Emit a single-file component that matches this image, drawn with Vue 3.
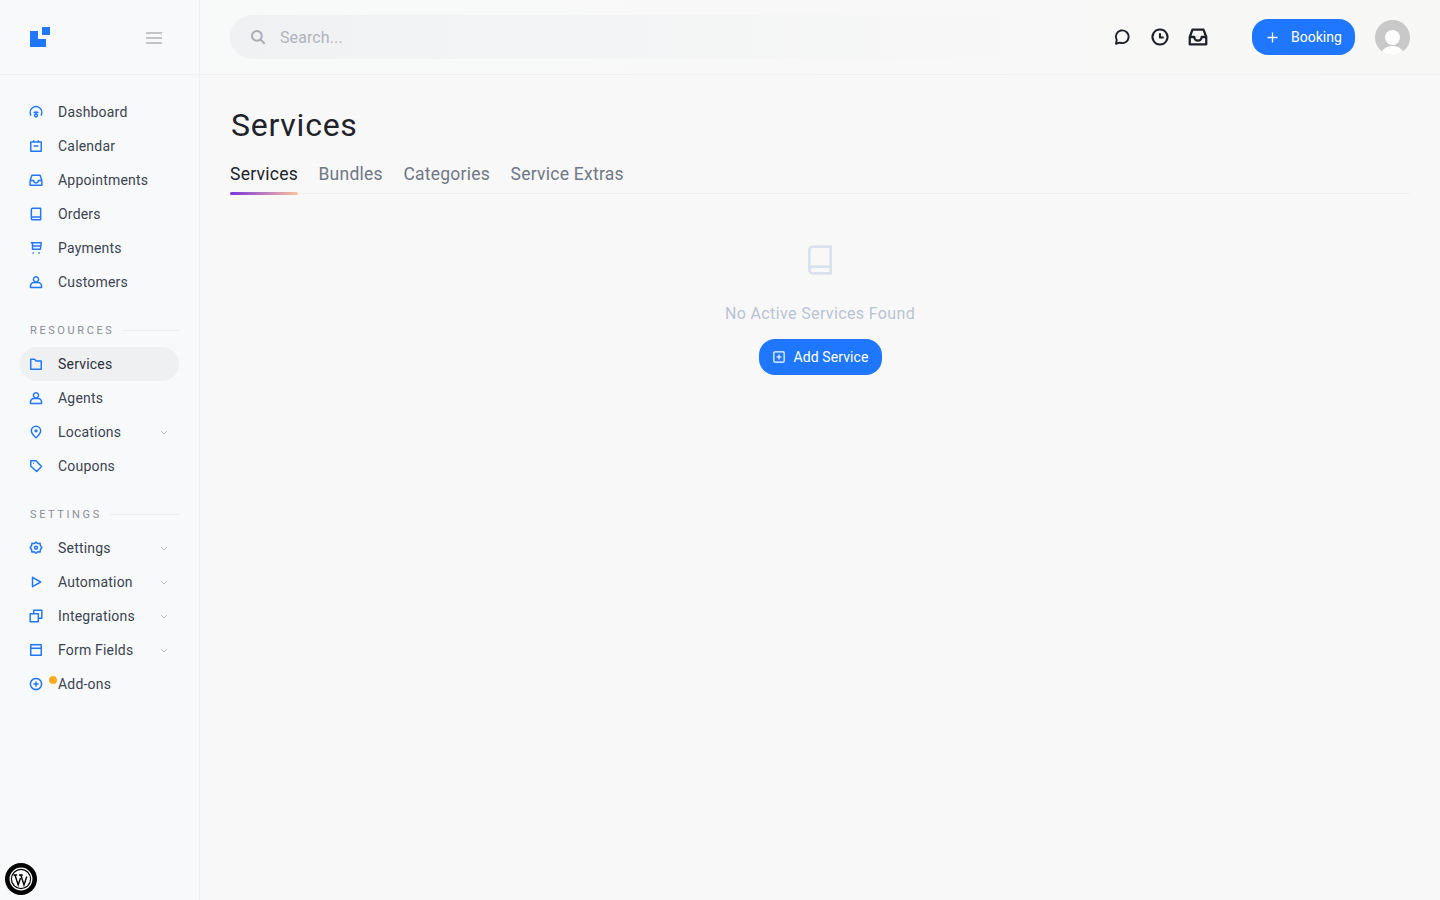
<script setup>
const icons = {
  gauge: 'M3.500 18A10 10 0 1 1 20.500 18M8 13.500a5.500 5.500 0 0 1 8 0M12 11.500v4M12 15.500a2.500 2.500 0 1 0 .01 0z',
  calendar: 'M3 5h18v16H3zM8 2v4M16 2v4M8 12h8',
  inbox: 'M2 13l3-9h14l3 9v8H2zM2 13h6a4 4 0 0 0 8 0h6',
  book: 'M4 19V4.500A2.500 2.500 0 0 1 6.500 2H20v20H6.500A2.500 2.500 0 0 1 4 19.500a2.500 2.500 0 0 1 2.500-2.500H20',
  cart: 'M3 3h18l-1.500 11H6V3M6 8.500h14M6 20.500h2.500M16 20.500h2.500',
  user: 'M12 3a4.500 4.500 0 1 1-.01 0zM2.500 21.500v-2.500a6 6 0 0 1 6-6h7a6 6 0 0 1 6 6v2.500z',
  folder: 'M3 4h7l2 3h9v14H3z',
  pin: 'M12 22c-4-3.800-8-7-8-12a8 8 0 0 1 16 0c0 5-4 8.200-8 12zM12 8.500a1.500 1.500 0 1 1-.01 0z',
  tag: 'M3 3h9l9.500 10-8.500 8.500L3 12zM7 7.500h1.500',
  gear: 'M12 2l3 2.500 4-.5.500 4 2.500 3.500-2.500 3.500-.5 4-4-.5L12 21l-3-2.500-4 .5-.5-4L2 11.500 4.500 8 5 4l4 .5zM12 9a2.500 2.500 0 1 1-.01 0z',
  play: 'M6 4l14 8-14 8z',
  stack: 'M8 8V2h14v14h-6M2 8h14v14H2z',
  form: 'M3 3h18v18H3zM3 9h18',
  addon: 'M12 2.500a9.500 9.500 0 1 1-.01 0zM7.500 12h9M12 7.500v9',
}
const mainNav = [
  { label: 'Dashboard', icon: 'gauge' },
  { label: 'Calendar', icon: 'calendar' },
  { label: 'Appointments', icon: 'inbox' },
  { label: 'Orders', icon: 'book' },
  { label: 'Payments', icon: 'cart' },
  { label: 'Customers', icon: 'user' },
]
const resources = [
  { label: 'Services', icon: 'folder', active: true },
  { label: 'Agents', icon: 'user' },
  { label: 'Locations', icon: 'pin', more: true },
  { label: 'Coupons', icon: 'tag' },
]
const settings = [
  { label: 'Settings', icon: 'gear', more: true },
  { label: 'Automation', icon: 'play', more: true },
  { label: 'Integrations', icon: 'stack', more: true },
  { label: 'Form Fields', icon: 'form', more: true },
  { label: 'Add-ons', icon: 'addon', dot: true },
]
const groups = [
  { title: null, items: mainNav },
  { title: 'RESOURCES', items: resources },
  { title: 'SETTINGS', items: settings },
]
const tabs = ['Services', 'Bundles', 'Categories', 'Service Extras']
</script>

<template>
  <div class="app">
    <aside class="sidebar">
      <div class="brand">
        <svg class="logo" width="20" height="20" viewBox="0 0 20 20"><path d="M0 4h8v8h8v8H0zM12 0h8v8h-8z" fill="#1f77ff" /></svg>
        <svg class="burger" width="16" height="12" viewBox="0 0 16 12"><path d="M0 1h16M0 6h16M0 11h16" stroke="#b3b3b3" stroke-width="1.500" fill="none" /></svg>
      </div>
      <nav class="nav">
        <section v-for="(g, i) in groups" :key="i" class="group">
          <div v-if="g.title" class="group-title"><span>{{ g.title }}</span><i></i></div>
          <a v-for="it in g.items" :key="it.label" class="item" :class="{ active: it.active }">
            <svg class="item-icon" width="14" height="14" viewBox="0 0 24 24"><path :d="icons[it.icon]" /></svg>
            <span v-if="it.dot" class="dot"></span>
            <span class="item-label">{{ it.label }}</span>
            <svg v-if="it.more" class="chev" width="8" height="5" viewBox="0 0 8 5"><path d="M1 1l3 3 3-3" /></svg>
          </a>
        </section>
      </nav>
      <div class="wp">
        <svg width="24" height="24" viewBox="0 0 24 24">
          <circle cx="12" cy="12" r="10.800" fill="none" stroke="#fff" stroke-width="1.300" />
          <circle cx="12" cy="12" r="9" fill="#fff" />
          <path d="M4.500 8h3.600M6 8l3.200 10 2.300-7M10 8h3.800M11.800 8l3.200 10 2.800-8.500" fill="none" stroke="#000" stroke-width="1.400" />
        </svg>
      </div>
    </aside>
    <div class="content">
      <header class="topbar">
        <div class="search">
          <svg width="18" height="18" viewBox="0 0 24 24"><path d="M10.500 4a6.500 6.500 0 1 1-.01 0zM15.500 15.500L21 21" fill="none" stroke="#a9adb5" stroke-width="2.600" /></svg>
          <input class="search-input" placeholder="Search..." />
        </div>
        <div class="top-icons">
          <svg width="18" height="18" viewBox="0 0 24 24"><path d="M4 21l1-5a8.500 8.500 0 1 1 4 3.500z" /></svg>
          <svg width="20" height="20" viewBox="0 0 24 24"><path d="M12 3a9 9 0 1 1-.01 0zM12 7.500V12.500h4.500" /></svg>
          <svg width="22" height="22" viewBox="0 0 24 24"><path d="M3 12l3-8h12l3 8v8H3zM3 12h5a4 4 0 0 0 8 0h5" /></svg>
        </div>
        <button class="btn booking">
          <svg width="11" height="11" viewBox="0 0 11 11"><path d="M5.500 .5v10M.5 5.500h10" stroke="#fff" stroke-width="1.300" fill="none" /></svg>
          Booking
        </button>
        <svg class="avatar" width="35" height="35" viewBox="0 0 35 35">
          <defs><clipPath id="av"><circle cx="17.500" cy="17.500" r="17.500" /></clipPath></defs>
          <g clip-path="url(#av)">
            <rect width="35" height="35" fill="#c8c8c8" />
            <circle cx="17.500" cy="17.500" r="7.500" fill="#fff" />
            <ellipse cx="17.500" cy="37" rx="12.500" ry="11" fill="#fff" />
          </g>
        </svg>
      </header>
      <main class="page">
        <h1 class="title">Services</h1>
        <div class="tabs">
          <a v-for="(t, i) in tabs" :key="t" class="tab" :class="{ on: i === 0 }">{{ t }}</a>
        </div>
        <div class="empty">
          <svg class="empty-icon" width="32" height="32" viewBox="0 0 24 24"><path d="M4 19V4.500A2.500 2.500 0 0 1 6.500 2H20v20H6.500A2.500 2.500 0 0 1 4 19.500a2.500 2.500 0 0 1 2.500-2.500H20" /></svg>
          <p class="empty-text">No Active Services Found</p>
          <button class="btn add">
            <svg width="12" height="12" viewBox="0 0 14 14"><path d="M2 1h10a1 1 0 0 1 1 1v10a1 1 0 0 1-1 1H2a1 1 0 0 1-1-1V2a1 1 0 0 1 1-1zM7 4v6M4 7h6" stroke="#fff" stroke-width="1.400" fill="none" /></svg>
            Add Service
          </button>
        </div>
      </main>
    </div>
  </div>
</template>

<style>
html, body { margin: 0; background: #f8f8f8; }
</style>

<style scoped>
.app {
  display: flex;
  height: 900px;
  font-family: Roboto, "Liberation Sans", sans-serif;
  letter-spacing: 0.2px;
  color: #3b4352;
  overflow: hidden;
}
.sidebar {
  position: relative;
  width: 199px;
  flex: none;
  background: #f8f9fb;
  border-right: 1px solid #eff0f2;
  display: flex;
  flex-direction: column;
}
.brand {
  height: 75px;
  box-sizing: border-box;
  border-bottom: 1px solid #eff0f2;
  display: flex;
  align-items: center;
  justify-content: space-between;
  padding: 0 37px 0 30px;
}
.burger { margin-top: 1px; }
.nav {
  padding: 20px 20px 0;
  display: flex;
  flex-direction: column;
  gap: 24px;
}
.group-title {
  height: 14px;
  margin: 0 0 10px 10px;
  display: flex;
  align-items: center;
  gap: 8px;
  font-size: 11px;
  letter-spacing: 2.600px;
  color: #898e97;
}
.group-title i {
  flex: 1;
  height: 1px;
  background: #eceef1;
}
.item {
  position: relative;
  height: 34px;
  display: flex;
  align-items: center;
  padding: 0 11px 0 9px;
  border-radius: 17px;
  font-size: 14px;
}
.item.active {
  background: #eff0f2;
  color: #2b303b;
}
.item-icon {
  flex: none;
  margin-right: 15px;
}
.item-icon path {
  fill: none;
  stroke: #1f77ff;
  stroke-width: 2.500;
  stroke-linejoin: round;
}
.item-label { flex: 1; }
.chev path {
  fill: none;
  stroke: #bcc0c6;
  stroke-width: 1;
}
.dot {
  position: absolute;
  left: 29px;
  top: 9px;
  width: 8px;
  height: 8px;
  border-radius: 50%;
  background: #fca91f;
  box-shadow: 0 0 0 2px #fff;
}
.wp {
  position: absolute;
  left: 5px;
  bottom: 5px;
  width: 32px;
  height: 32px;
  border-radius: 50%;
  background: #000;
  display: flex;
  align-items: center;
  justify-content: center;
}
.content {
  flex: 1;
  min-width: 0;
  display: flex;
  flex-direction: column;
}
.topbar {
  height: 75px;
  flex: none;
  box-sizing: border-box;
  border-bottom: 1px solid #eff0f2;
  background: linear-gradient(90deg, #f8f9f9, #f7f7f6);
  display: flex;
  align-items: center;
  padding: 0 30px;
}
.search {
  width: 800px;
  height: 44px;
  box-sizing: border-box;
  border-radius: 22px;
  background: linear-gradient(90deg, #f0f1f3, rgba(240, 241, 243, 0));
  display: flex;
  align-items: center;
  gap: 13px;
  padding-left: 19px;
}
.search-input {
  flex: 1;
  min-width: 0;
  border: 0;
  outline: 0;
  background: transparent;
  font: inherit;
  font-size: 16px;
  letter-spacing: 0.1px;
  padding: 0;
}
.search-input::placeholder { color: #b0b4bc; opacity: 1; }
.top-icons {
  margin-left: auto;
  display: grid;
  grid-template-columns: repeat(3, 38px);
  align-items: center;
  justify-items: center;
  margin-right: 35px;
}
.top-icons path {
  fill: none;
  stroke: #1e2129;
  stroke-width: 2.500;
  stroke-linejoin: round;
}
.btn {
  border: 0;
  background: #1f77ff;
  color: #fff;
  font: inherit;
  font-size: 14px;
  display: inline-flex;
  align-items: center;
  height: 36px;
  border-radius: 16px;
  padding: 0;
  box-sizing: border-box;
}
.booking {
  width: 103px;
  padding-left: 15px;
  gap: 13px;
  margin-right: 20px;
}
.add {
  width: 123px;
  padding-left: 14px;
  gap: 9px;
  letter-spacing: 0.1px;
}
.avatar {
  flex: none;
  margin-top: 1px;
}
.page {
  flex: 1;
  padding: 0 30px;
  display: flex;
  flex-direction: column;
}
.title {
  margin: 29px 0 0 1px;
  font-size: 32px;
  line-height: 42px;
  font-weight: 400;
  letter-spacing: 0.75px;
  color: #1f222b;
}
.tabs {
  margin-top: 9px;
  height: 39px;
  box-sizing: border-box;
  border-bottom: 1px solid #eef0f2;
  display: flex;
  gap: 20.500px;
}
.tab {
  position: relative;
  font-size: 17.500px;
  letter-spacing: 0.25px;
  line-height: 38px;
  height: 38px;
  color: #6f7785;
}
.tab.on { color: #20232c; }
.tab.on::after {
  content: "";
  position: absolute;
  left: 0;
  right: 0;
  bottom: -2px;
  height: 3px;
  border-radius: 2px;
  background: linear-gradient(90deg, #7a35e0, #fcc49c);
}
.empty {
  display: flex;
  flex-direction: column;
  align-items: center;
  padding-top: 50px;
}
.empty-icon path {
  fill: none;
  stroke: #d9e1ec;
  stroke-width: 2;
  stroke-linejoin: round;
}
.empty-text {
  margin: 27px 0 14px;
  font-size: 16px;
  line-height: 22px;
  letter-spacing: 0.37px;
  color: #b9c3d3;
}
</style>
